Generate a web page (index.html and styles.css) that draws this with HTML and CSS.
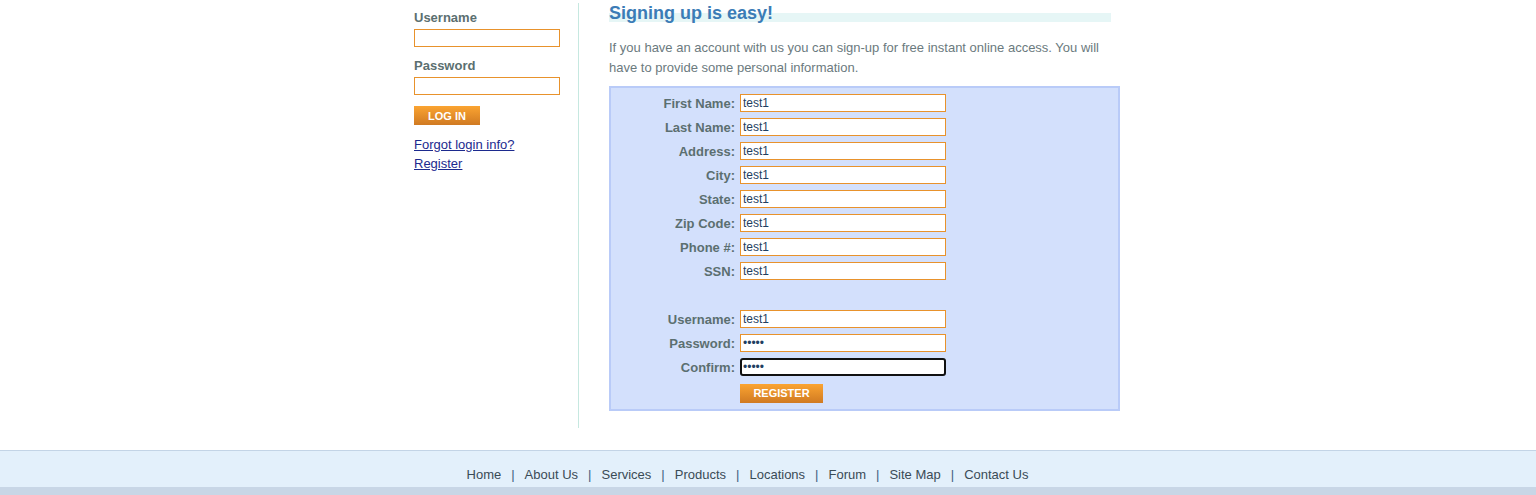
FILE: index.html
```html
<!DOCTYPE html>
<html lang="en">
<head>
<meta charset="utf-8">
<title>ParaBank | Register for Free Online Account Access</title>
<link rel="stylesheet" href="styles.css">
</head>
<body>
<div class="page">
  <div class="main">
    <aside class="left-panel">
      <form class="login">
        <label class="login-label" for="lu">Username</label>
        <input class="field login-field" id="lu" type="text">
        <label class="login-label" for="lp">Password</label>
        <input class="field login-field" id="lp" type="password">
        <button class="btn btn-login" type="button">Log In</button>
      </form>
      <div class="login-links">
        <a href="#">Forgot login info?</a>
        <a href="#">Register</a>
      </div>
    </aside>
    <section class="right-panel">
      <h1 class="title"><span>Signing up is easy!</span></h1>
      <p class="intro">If you have an account with us you can sign-up for free instant online access. You will have to provide some personal information.</p>
      <form class="register">
        <label class="reg-label">First Name:</label><input class="field reg-field" type="text" value="test1">
        <label class="reg-label">Last Name:</label><input class="field reg-field" type="text" value="test1">
        <label class="reg-label">Address:</label><input class="field reg-field" type="text" value="test1">
        <label class="reg-label">City:</label><input class="field reg-field" type="text" value="test1">
        <label class="reg-label">State:</label><input class="field reg-field" type="text" value="test1">
        <label class="reg-label">Zip Code:</label><input class="field reg-field" type="text" value="test1">
        <label class="reg-label">Phone #:</label><input class="field reg-field" type="text" value="test1">
        <label class="reg-label">SSN:</label><input class="field reg-field" type="text" value="test1">
        <div class="spacer"></div>
        <label class="reg-label">Username:</label><input class="field reg-field" type="text" value="test1">
        <label class="reg-label">Password:</label><input class="field reg-field" type="password" value="test1">
        <label class="reg-label">Confirm:</label><input class="field reg-field is-focused" type="password" value="test1">
        <span></span><button class="btn btn-register" type="button">Register</button>
      </form>
    </section>
  </div>
  <footer class="footer">
    <ul class="footer-links">
      <li><a href="#">Home</a></li>
      <li class="sep">|</li>
      <li><a href="#">About Us</a></li>
      <li class="sep">|</li>
      <li><a href="#">Services</a></li>
      <li class="sep">|</li>
      <li><a href="#">Products</a></li>
      <li class="sep">|</li>
      <li><a href="#">Locations</a></li>
      <li class="sep">|</li>
      <li><a href="#">Forum</a></li>
      <li class="sep">|</li>
      <li><a href="#">Site Map</a></li>
      <li class="sep">|</li>
      <li><a href="#">Contact Us</a></li>
    </ul>
  </footer>
  <div class="footer-bottom"></div>
</div>
</body>
</html>
```
FILE: styles.css
```css
body {
  margin: 0;
  font-family: "Liberation Sans", Arial, sans-serif;
  font-size: 13px;
  color: #6b7a7e;
  background: #ffffff;
}
.main {
  width: 760px;
  margin: 0 auto;
  display: flex;
  align-items: flex-start;
  padding-top: 3px;
  padding-bottom: 22px;
}
.left-panel {
  width: 164px;
  padding-left: 26px;
  border-right: 1px solid #c6e8e0;
  min-height: 425px;
}
.login {
  display: flex;
  flex-direction: column;
  align-items: flex-start;
}
.login-label {
  font-weight: bold;
  color: #5b6f70;
  line-height: 16px;
  margin-top: 7px;
  margin-bottom: 3px;
}
.field {
  box-sizing: border-box;
  height: 18px;
  border: 1px solid #e8922c;
  background: #fff;
  font-family: "Liberation Sans", Arial, sans-serif;
  font-size: 12px;
  color: #1f3f62;
  padding: 0 2px;
  margin: 0;
  border-radius: 0;
  outline: none;
}
.login-field {
  width: 146px;
}
.login-field + .login-label {
  margin-top: 11px;
}
.btn {
  box-sizing: border-box;
  height: 19px;
  border: 0;
  padding: 0;
  margin: 0;
  background: linear-gradient(#fba431, #d07a22);
  color: #fff;
  font-family: "Liberation Sans", Arial, sans-serif;
  font-size: 11px;
  font-weight: bold;
  text-transform: uppercase;
  cursor: pointer;
}
.btn-login {
  width: 66px;
  margin-top: 11px;
}
.login-links {
  display: flex;
  flex-direction: column;
  align-items: flex-start;
  margin-top: 10px;
  line-height: 19px;
}
.login-links a {
  color: #1c2a8e;
  text-decoration: underline;
}
.right-panel {
  width: 511px;
  padding-left: 30px;
}
.title {
  margin: 0;
  font-size: 18px;
  font-weight: bold;
  color: #3b7cb6;
  line-height: 20px;
  width: 502px;
  background: linear-gradient(to bottom, transparent 0, transparent 10px, #e6f6f6 10px, #e6f6f6 19px, transparent 19px);
}
.intro {
  margin: 15px 0 0;
  line-height: 20px;
}
.register {
  margin-top: 8px;
  border: 2px solid #b9cbf8;
  background: #d3e0fc;
  display: grid;
  grid-template-columns: 124px 206px;
  grid-auto-rows: 24px;
  column-gap: 5px;
  align-items: center;
  padding: 3px 0 6px;
}
.reg-label {
  font-weight: bold;
  color: #5b6f70;
  text-align: right;
}
.reg-field {
  width: 206px;
}
.is-focused {
  border: 2px solid #111;
  border-radius: 3px;
  padding: 0 1px;
}
.spacer {
  grid-column: 1 / -1;
}
.btn-register {
  width: 83px;
  margin-top: 4px;
}
.footer {
  border-top: 1px solid #c3d4e6;
  background: #e3f0fb;
  height: 36px;
}
.footer-links {
  list-style: none;
  margin: 0;
  padding: 16px 41px 0 0;
  display: flex;
  justify-content: center;
  gap: 10px;
  line-height: 16px;
}
.footer-links a {
  color: #3a4b56;
  text-decoration: none;
}
.footer-links .sep {
  color: #3f5f80;
}
.footer-bottom {
  height: 80px;
  background: #c8d6e6;
}
```
